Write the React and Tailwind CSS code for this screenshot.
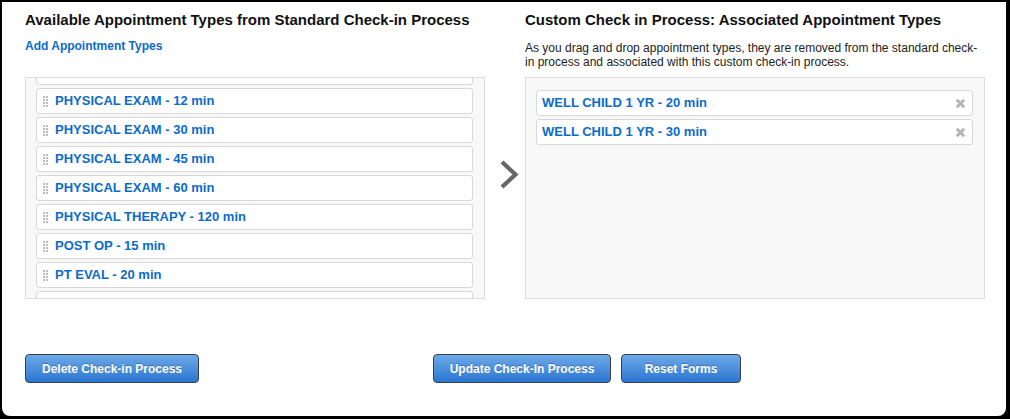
import React from 'react';

const available = [
  'PHYSICAL EXAM - 10 min',
  'PHYSICAL EXAM - 12 min',
  'PHYSICAL EXAM - 30 min',
  'PHYSICAL EXAM - 45 min',
  'PHYSICAL EXAM - 60 min',
  'PHYSICAL THERAPY - 120 min',
  'POST OP - 15 min',
  'PT EVAL - 20 min',
  'PT VISIT - 30 min',
];

const associated = ['WELL CHILD 1 YR - 20 min', 'WELL CHILD 1 YR - 30 min'];

function Grip() {
  return (
    <svg width="5" height="11" viewBox="0 0 5 11" className="shrink-0">
      {[0, 3, 6, 9].map((y) => (
        <g key={y} fill="#bcbcbc">
          <rect x="0" y={y} width="2" height="2" />
          <rect x="3" y={y} width="2" height="2" />
        </g>
      ))}
    </svg>
  );
}

function Remove() {
  return (
    <svg width="11" height="11" viewBox="0 0 11 11" className="shrink-0">
      <path d="M1.8 1.8 L9.2 9.2 M9.2 1.8 L1.8 9.2" stroke="#b4b4b4" strokeWidth="3" />
    </svg>
  );
}

function Button({ children, className = '' }) {
  return (
    <button
      className={`h-[29px] rounded-[4px] border border-[#3a3f46] bg-linear-to-b from-[#6ca9e8] to-[#2a76d1] text-[12px] font-bold text-white [text-shadow:0_-1px_0_rgba(0,0,0,0.25)] ${className}`}
    >
      {children}
    </button>
  );
}

export default function App() {
  return (
    <div className="h-screen w-full bg-black pl-[2px] pt-[2px] font-['Liberation_Sans',Arial,sans-serif]">
      <div className="h-[414px] w-[1004px] rounded-b-[8px] bg-white pl-[23px] pt-[9px]">
        <div className="flex">
          {/* standard process */}
          <div className="w-[460px]">
            <h2 className="text-[15px] leading-[18px] font-bold whitespace-nowrap text-[#111]">
              Available Appointment Types from Standard Check-in Process
            </h2>
            <a className="mt-[10px] block text-[12px] leading-[14px] font-bold text-[#0b6bcb]">
              Add Appointment Types
            </a>
            <div className="mt-[24px] h-[222px] overflow-hidden border border-[#dcdcdc] bg-[#f8f8f8] pl-[10px] pr-[11px]">
              <div className="-mt-[19px] flex flex-col gap-[3px]">
                {available.map((t) => (
                  <div
                    key={t}
                    className="flex h-[26px] shrink-0 items-center gap-[7px] rounded-[3px] border border-[#d8d8d8] bg-white pl-[6px]"
                  >
                    <Grip />
                    <span className="text-[13px] font-bold text-[#0b6bcb]">{t}</span>
                  </div>
                ))}
              </div>
            </div>
          </div>

          <div className="w-[40px] pl-[14px] pt-[148px]">
            <svg width="20" height="31" viewBox="0 0 20 31">
              <path d="M3 3 L16.5 15.5 L3 28" fill="none" stroke="#676767" strokeWidth="4.2" />
            </svg>
          </div>

          {/* custom process */}
          <div className="w-[460px]">
            <h2 className="text-[15px] leading-[18px] font-bold whitespace-nowrap text-[#111]">
              Custom Check in Process: Associated Appointment Types
            </h2>
            <p className="mt-[12px] text-[12px] leading-[14px] text-[#222]">
              As you drag and drop appointment types, they are removed from the standard check-in process and
              associated with this custom check-in process.
            </p>
            <div className="mt-[8px] flex h-[222px] flex-col gap-[3px] border border-[#dcdcdc] bg-[#f8f8f8] pt-[12px] pl-[10px] pr-[11px]">
              {associated.map((t) => (
                <div
                  key={t}
                  className="flex h-[26px] items-center justify-between rounded-[3px] border border-[#d8d8d8] bg-white pl-[5px] pr-[6px]"
                >
                  <span className="text-[13px] font-bold text-[#0b6bcb]">{t}</span>
                  <Remove />
                </div>
              ))}
            </div>
          </div>
        </div>

        <div className="mt-[55px] flex">
          <Button className="w-[174px]">Delete Check-in Process</Button>
          <Button className="ml-[234px] w-[178px]">Update Check-In Process</Button>
          <Button className="ml-[10px] w-[120px]">Reset Forms</Button>
        </div>
      </div>
    </div>
  );
}
